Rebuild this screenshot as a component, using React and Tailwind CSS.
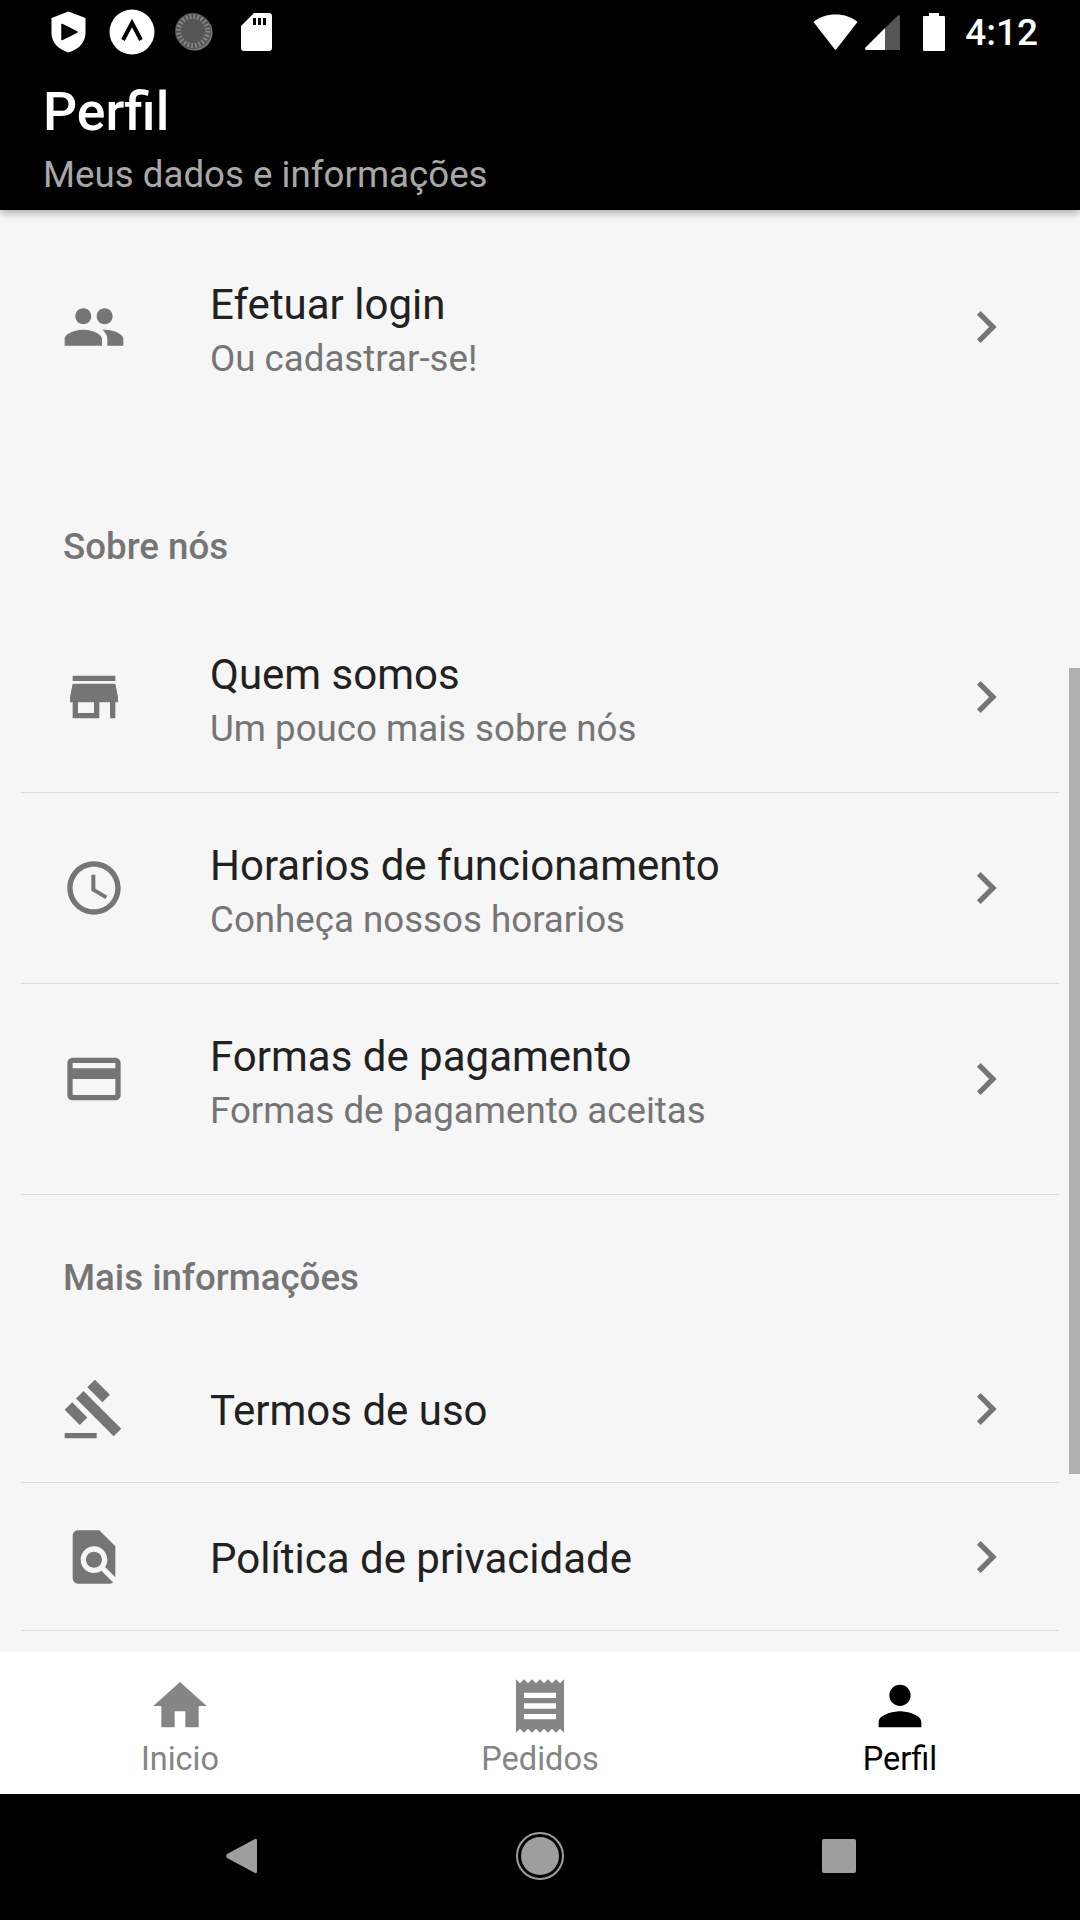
const ICONS = {
  people: "M16 11c1.66 0 2.99-1.34 2.99-3S17.66 5 16 5c-1.66 0-3 1.34-3 3s1.34 3 3 3zm-8 0c1.66 0 2.99-1.34 2.99-3S9.66 5 8 5C6.34 5 5 6.34 5 8s1.34 3 3 3zm0 2c-2.33 0-7 1.17-7 3.5V19h14v-2.5c0-2.33-4.67-3.5-7-3.5zm8 0c-.29 0-.62.02-.97.05 1.16.84 1.97 1.97 1.97 3.45V19h6v-2.5c0-2.33-4.67-3.5-7-3.5z",
  store: "M20 4H4v2h16V4zm1 10v-2l-1-5H4l-1 5v2h1v6h10v-6h4v6h2v-6h1zm-9 4H6v-4h6v4z",
  clock: "M11.99 2C6.47 2 2 6.48 2 12s4.47 10 9.99 10C17.52 22 22 17.52 22 12S17.52 2 11.99 2zM12 20c-4.42 0-8-3.58-8-8s3.58-8 8-8 8 3.58 8 8-3.58 8-8 8zm.5-13H11v6l5.25 3.15.75-1.23-4.5-2.67z",
  card: "M20 4H4c-1.11 0-1.99.89-1.99 2L2 18c0 1.11.89 2 2 2h16c1.11 0 2-.89 2-2V6c0-1.11-.89-2-2-2zm0 14H4v-6h16v6zm0-10H4V6h16v2z",
  gavel: "M1 21h12v2H1zM5.245 8.07l2.83-2.827 14.14 14.142-2.828 2.828zM12.317 1l5.657 5.656-2.83 2.83-5.654-5.66zM3.825 9.485l5.657 5.657-2.828 2.828-5.657-5.657z",
  find: "M20 19.59V8l-6-6H6c-1.1 0-1.99.9-1.99 2L4 20c0 1.1.89 2 1.99 2H18c.45 0 .85-.15 1.19-.4l-4.43-4.43c-.8.52-1.74.83-2.76.83-2.76 0-5-2.24-5-5s2.24-5 5-5 5 2.24 5 5c0 1.02-.31 1.96-.83 2.75L20 19.59zM9 13c0 1.66 1.34 3 3 3s3-1.34 3-3-1.34-3-3-3-3 1.34-3 3z",
  chevron: "M10 6L8.59 7.41 13.17 12l-4.58 4.59L10 18l6-6z",
  home: "M10 20v-6h4v6h5v-8h3L12 3 2 12h3v8z",
  receipt: "M18 17H6v-2h12v2zm0-4H6v-2h12v2zm0-4H6V7h12v2zM3 22l1.5-1.5L6 22l1.5-1.5L9 22l1.5-1.5L12 22l1.5-1.5L15 22l1.5-1.5L18 22l1.5-1.5L21 22V2l-1.5 1.5L18 2l-1.5 1.5L15 2l-1.5 1.5L12 2l-1.5 1.5L9 2 7.5 3.5 6 2 4.5 3.5 3 2v20z",
  person: "M12 12c2.21 0 4-1.79 4-4s-1.79-4-4-4-4 1.79-4 4 1.79 4 4 4zm0 2c-2.67 0-8 1.34-8 4v2h16v-2c0-2.66-5.33-4-8-4z",
};

function Icon({ name, className }) {
  return (
    <svg viewBox="0 0 24 24" fill="currentColor" className={className}>
      <path d={ICONS[name]} />
    </svg>
  );
}

function StatusBar() {
  return (
    <div className="flex h-[64px] items-center pl-[51px] pr-[42px]">
      <svg viewBox="0 0 35 42" className="h-[42px] w-[35px]">
        <path d="M17.5 0.5 L34.5 7 V22 C34.5 32 27 38.5 17.5 41.5 C8 38.5 0.5 32 0.5 22 V7 Z" fill="#fff" />
        <path d="M11 13.5 L26 21 L11 28.5 Z" fill="#000" stroke="#000" strokeWidth="1.5" strokeLinejoin="round" />
      </svg>
      <svg viewBox="0 0 46 46" className="ml-[23px] h-[46px] w-[46px]">
        <circle cx="23" cy="23" r="22.5" fill="#fff" />
        <path d="M14 31 L23 14 L32 31" fill="none" stroke="#000" strokeWidth="4" />
      </svg>
      <svg viewBox="0 0 38 38" className="ml-[20px] h-[38px] w-[38px]">
        <circle cx="19.5" cy="19.5" r="18" fill="#777" />
        <circle cx="18" cy="18" r="18" fill="#555" />
        <circle cx="18" cy="18" r="14.5" fill="none" stroke="#8a8a8a" strokeWidth="5" strokeDasharray="1.6 2.2" />
      </svg>
      <svg viewBox="0 0 31 38" className="ml-[28px] h-[38px] w-[31px]">
        <path fillRule="evenodd" fill="#fff" d="M13 0 H28 C29.7 0 31 1.3 31 3 V35 C31 36.7 29.7 38 28 38 H3 C1.3 38 0 36.7 0 35 V13 Z M12 5 V12 H15 V5 Z M17 5 V12 H20 V5 Z M22 5 V12 H25 V5 Z" />
      </svg>
      <svg viewBox="0 0 45 36" className="ml-auto h-[36px] w-[45px]">
        <path d="M0.5 8 C6 3 14 0.5 22.5 0.5 C31 0.5 39 3 44.5 8 L23.5 35 Q22.5 36 21.5 35 Z" fill="#fff" />
      </svg>
      <svg viewBox="0 0 35 35" className="ml-[7px] h-[35px] w-[35px]">
        <path d="M0 33 L20 13 V35 H1 Q0 35 0 33 Z" fill="#fff" />
        <path d="M20 13 L33 0.5 Q35 -0.5 35 2 V35 H20 Z" fill="#555" />
      </svg>
      <svg viewBox="0 0 22 38" className="ml-[23px] h-[38px] w-[22px]">
        <path d="M6 0 H16 V3 H21 Q22 3 22 4 V37 Q22 38 21 38 H1 Q0 38 0 37 V4 Q0 3 1 3 H6 Z" fill="#fff" />
      </svg>
      <span className="ml-[20px] text-[37px] font-medium leading-none text-white">4:12</span>
    </div>
  );
}

function ListRow({ icon, title, subtitle, height = "h-[190px]" }) {
  return (
    <div className={`flex items-center pl-[41px] pr-[41px] ${height}`}>
      <Icon name={icon} className="h-16 w-16 shrink-0 text-[#757575]" />
      <div className={`ml-[84px] flex-1 ${subtitle ? "pt-[10px]" : "pt-[5px]"}`}>
        <div className="text-[42px] leading-[54px] text-[#212121]">{title}</div>
        {subtitle && <div className="text-[36.7px] leading-[54px] text-[#757575]">{subtitle}</div>}
      </div>
      <Icon name="chevron" className="h-16 w-16 shrink-0 text-[#757575]" />
    </div>
  );
}

function Divider() {
  return <div className="h-px bg-[#dcdcdc]" />;
}

function SectionLabel({ children, className }) {
  return (
    <div className={`pl-[42px] text-[36.7px] font-medium leading-[44px] text-[#757575] ${className}`}>{children}</div>
  );
}

function TabItem({ icon, label, active }) {
  const color = active ? "text-black" : "text-[#858585]";
  return (
    <div className={`flex flex-1 flex-col items-center pt-[22px] ${color}`}>
      <Icon name={icon} className="h-16 w-16" />
      <span className="text-[32.5px] leading-[43px]">{label}</span>
    </div>
  );
}

export default function App() {
  return (
    <div className="flex h-[1920px] w-[1080px] flex-col overflow-hidden bg-[#f6f6f6] font-['Roboto',sans-serif]">
      <header className="relative z-10 h-[210px] bg-black shadow-[0_3px_8px_rgba(0,0,0,0.3)]">
        <StatusBar />
        <div className="pl-[43px] pt-[18px]">
          <h1 className="text-[53.5px] font-medium leading-[60px] text-white">Perfil</h1>
          <p className="mt-[10px] text-[36.7px] leading-[46px] text-[#a8a8a8]">Meus dados e informações</p>
        </div>
      </header>

      <main className="relative flex-1 overflow-hidden px-[21px]">
        <div className="mt-[22px]">
          <ListRow icon="people" title="Efetuar login" subtitle="Ou cadastrar-se!" />
        </div>
        <SectionLabel className="mt-[103px]">Sobre nós</SectionLabel>
        <div className="mt-[33px]">
          <ListRow icon="store" title="Quem somos" subtitle="Um pouco mais sobre nós" />
          <Divider />
          <ListRow icon="clock" title="Horarios de funcionamento" subtitle="Conheça nossos horarios" />
          <Divider />
          <ListRow icon="card" title="Formas de pagamento" subtitle="Formas de pagamento aceitas" height="h-[189px]" />
          <div className="h-[21px]" />
          <Divider />
        </div>
        <SectionLabel className="mt-[61px]">Mais informações</SectionLabel>
        <div className="mt-[35px]">
          <ListRow icon="gavel" title="Termos de uso" height="h-[147px]" />
          <Divider />
          <ListRow icon="find" title="Política de privacidade" height="h-[147px]" />
          <Divider />
        </div>
        <div className="absolute right-0 top-[458px] h-[806px] w-[11px] bg-[#b0b0b0]" />
      </main>

      <nav className="flex h-[142px] bg-white">
        <TabItem icon="home" label="Inicio" />
        <TabItem icon="receipt" label="Pedidos" />
        <TabItem icon="person" label="Perfil" active />
      </nav>

      <div className="flex h-[126px] items-center bg-black pb-[2px]">
        <div className="flex flex-1 justify-center pr-[33px]">
          <svg viewBox="0 0 31 36" className="h-[36px] w-[31px]">
            <path d="M29 1 Q31 0 31 3 V33 Q31 36 29 35 L1 20 Q-0.5 18 1 16 Z" fill="#9e9e9e" />
          </svg>
        </div>
        <svg viewBox="0 0 48 48" className="h-12 w-12">
          <circle cx="24" cy="24" r="23" fill="none" stroke="#9e9e9e" strokeWidth="2" />
          <circle cx="24" cy="24" r="19" fill="#9e9e9e" />
        </svg>
        <div className="flex flex-1 justify-center pl-[34px]">
          <div className="h-[34px] w-[34px] rounded-[2px] bg-[#9e9e9e]" />
        </div>
      </div>
    </div>
  );
}
